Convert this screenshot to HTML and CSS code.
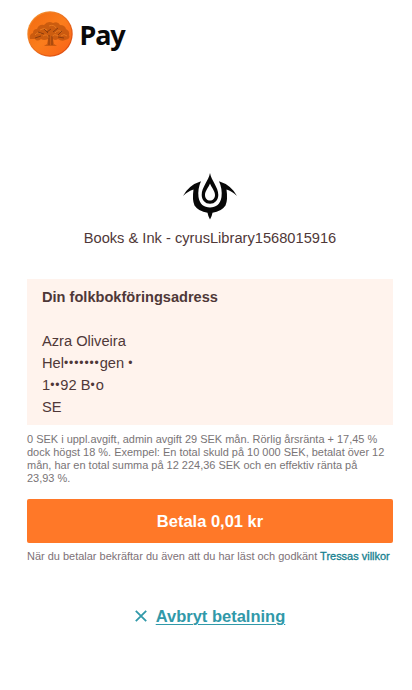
FILE: index.html
```html
<!DOCTYPE html>
<html lang="sv">
<head>
<meta charset="utf-8">
<title>Pay</title>
<link rel="stylesheet" href="styles.css">
</head>
<body>
<main class="page">
  <header class="brand">
    <svg class="coin" viewBox="0 0 46 46">
      <defs>
        <linearGradient id="rim" x1="0" y1="0" x2="1" y2="1">
          <stop offset="0" stop-color="#f99a32"/>
          <stop offset="1" stop-color="#d9420c"/>
        </linearGradient>
        <linearGradient id="face" x1="0" y1="0" x2="1" y2="1">
          <stop offset="0" stop-color="#f26a10"/>
          <stop offset=".5" stop-color="#fb7d1c"/>
          <stop offset="1" stop-color="#fa6018"/>
        </linearGradient>
      </defs>
      <circle cx="23" cy="23" r="22.7" fill="url(#rim)"/>
      <circle cx="23" cy="23" r="21.500" fill="url(#face)"/>
      <path d="M3 28Q2 23 6 22Q6 18 10 18Q12 13 17 14Q21 9 26 12Q31 10 33 14Q38 14 39 18Q43 20 42 24Q44 28 38 29Q35 31 31 28Q28 30 26 28L27 33L30 35H17L20 33L21 28Q17 30 14 28Q10 31 8 28Z" fill="#b8500c" opacity=".7"/>
      <path d="M8 24Q11 20 14 23M13 19Q17 16 20 19M22 15Q27 13 29 17M28 22Q31 18 35 21M34 25Q37 22 40 25M16 25Q20 22 22 27M25 26Q27 22 31 25" fill="none" stroke="#e87a20" stroke-width="1"/>
      <path d="M8 27L14 25M11 21L17 23M20 21L24 18M26 21L31 17M31 26L37 27M22 24L22 34M25 25L25 34M17 18L21 22M35 20L31 24" fill="none" stroke="#75310b" stroke-width=".9" opacity=".8"/>
    </svg>
    <span class="wordmark">Pay</span>
  </header>
  <section class="shop">
    <svg class="emblem" viewBox="0 0 56 48">
      <path d="M28 0C29.500 8 36.300 14 36.300 22C36.300 27 32.800 30.800 28 30.800S19.700 27 19.700 22C19.700 14 26.500 8 28 0ZM28 10.500C26.500 14.500 23 18 23 22C23 25.500 25.200 27.500 28 27.500S33 25.500 33 22C33 18 29.500 14.500 28 10.500Z" fill="#080808" fill-rule="evenodd"/>
      <path d="M1 23Q7 12 19 8.300Q15.500 16 16.500 24C17.500 31 22 34.500 28 34.500S38.500 31 39.500 24Q40.500 16 37 8.300Q49 12 55 23Q50 18 44.500 16.500Q46 27 43.500 32.500Q39.500 38.500 30.500 39.800Q30 43 28 46.500Q26 43 25.500 39.800Q16.500 38.500 12.500 32.500Q10 27 11.500 16.500Q6 18 1 23Z" fill="#080808"/>
    </svg>
    <p class="shop-name">Books &amp; Ink - cyrusLibrary1568015916</p>
  </section>
  <section class="address">
    <h1 class="address-title">Din folkbokföringsadress</h1>
    <p class="address-line">Azra Oliveira</p>
    <p class="address-line">Hel<span class="dots">•••••••</span>gen <span class="dots">•</span></p>
    <p class="address-line">1<span class="dots">••</span>92 B<span class="dots">•</span>o</p>
    <p class="address-line">SE</p>
  </section>
  <p class="terms">0 SEK i uppl.avgift, admin avgift 29 SEK mån. Rörlig årsränta + 17,45 %<br>dock högst 18 %. Exempel: En total skuld på 10 000 SEK, betalat över 12<br>mån, har en total summa på 12 224,36 SEK och en effektiv ränta på<br>23,93 %.</p>
  <button class="pay" type="button">Betala 0,01 kr</button>
  <p class="consent">När du betalar bekräftar du även att du har läst och godkänt <a class="consent-link">Tressas villkor</a></p>
  <div class="cancel">
    <svg class="cross" viewBox="0 0 12 12"><path d="M.8 .8L11.200 11.200M11.200 .8L.8 11.200" fill="none" stroke="#3199a9" stroke-width="1.800"/></svg>
    <a class="cancel-link">Avbryt betalning</a>
  </div>
</main>
</body>
</html>
```
FILE: styles.css
```css
* { box-sizing: border-box; }
body { margin: 0; background: #fff; font-family: "Liberation Sans", Arial, sans-serif; color: #4f3838; }
p, h1 { margin: 0; }
.page { width: 412px; height: 690px; padding: 11px 19px 0 27px; overflow: hidden; }
.brand { display: flex; align-items: center; height: 46px; }
.coin { width: 46px; height: 46px; }
.wordmark { margin-left: 6.5px; padding-top: 2px; font: bold 27px/46px "Noto Sans", sans-serif; letter-spacing: -1.1px; color: #0a0a0a; }
.shop { display: flex; flex-direction: column; align-items: center; margin-top: 116px; }
.emblem { width: 56px; height: 48px; }
.shop-name { margin-top: 6px; font-size: 14.67px; line-height: 22px; white-space: nowrap; }
.address { height: 146px; margin-top: 30px; padding: 7px 15px; background: #fff3ed; }
.address-title { margin-bottom: 22px; font-size: 14.6px; line-height: 22px; }
.address-line { font-size: 14.67px; line-height: 22px; }
.dots { display: inline-block; font-size: 12px; line-height: 14px; letter-spacing: .9px; vertical-align: 1px; }
.terms { margin-top: 8px; font-size: 10.97px; line-height: 13px; color: #797476; white-space: nowrap; }
.pay { display: block; width: 366px; height: 44px; margin-top: 14px; padding: 0; border: 0; border-radius: 2px; background: #ff7828; color: #fff; font: bold 16.5px/44px "Liberation Sans", Arial, sans-serif; }
.consent { margin-top: 6px; font-size: 10.97px; line-height: 14px; color: #7d7177; white-space: nowrap; }
.consent-link { color: #168190; -webkit-text-stroke: .3px #168190; }
.cancel { display: flex; align-items: center; justify-content: center; height: 24px; margin-top: 41px; }
.cross { width: 12px; height: 12px; margin-right: 9px; }
.cancel-link { font-size: 16.5px; font-weight: bold; line-height: 24px; color: #3199a9; text-decoration: underline; text-decoration-thickness: 1px; text-underline-offset: 2px; }
```
